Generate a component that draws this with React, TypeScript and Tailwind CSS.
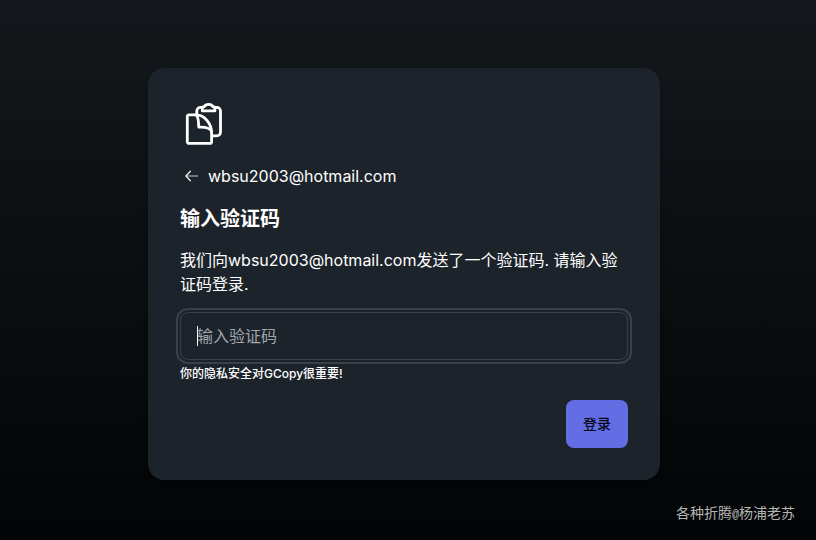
import React from "react";

function CopyLogo() {
  return (
    <svg
      className="block size-12"
      viewBox="0 0 48 48"
      fill="none"
      stroke="#fff"
      strokeWidth="2.8"
      strokeLinejoin="round"
      strokeLinecap="round"
    >
      <path d="M16.8 14V11a3.7 3.7 0 0 1 3.7-3.7h2M34.5 7.3h2.3a3.7 3.7 0 0 1 3.7 3.7v21.2a3.7 3.7 0 0 1-3.7 3.7h-4" />
      <path d="M22.3 10.9V8.3q0-1.5 1.6-1.6h.4q1-2.4 4.3-2.4t4.3 2.4h.4q1.6.1 1.6 1.6v2.6z" />
      <path d="M16 14.8H9a1.7 1.7 0 0 0-1.7 1.7v25.2a1.7 1.7 0 0 0 1.7 1.7h20.9a1.7 1.7 0 0 0 1.7-1.7V33C31.6 24 25 14.8 16 14.8z" />
      <path d="M16 14.8c3 2.7 2.2 7 2.8 12.4 5-.3 10.4 .3 12.7 3.8" />
    </svg>
  );
}

function BackArrow() {
  return (
    <svg className="block size-4" viewBox="0 0 16 16" fill="none" stroke="#fff">
      <path d="M6.7 3L1.8 8l4.9 5" strokeWidth="1.1" />
      <path d="M2 8h12" strokeWidth="1" strokeOpacity="0.75" />
    </svg>
  );
}

export default function App() {
  return (
    <div className="flex h-[540px] w-[816px] flex-col bg-linear-to-b/srgb from-[#14181c] to-[#030405] pt-[68px] font-[Inter,'Noto_Sans_CJK_SC',sans-serif] text-white">
      <main className="ml-[148px] flex h-[412px] w-[512px] shrink-0 flex-col rounded-2xl bg-[#1d232a] p-8 shadow-md">
        <CopyLogo />
        <div className="mt-4 flex h-6 items-center gap-2 pl-1 text-base">
          <BackArrow />
          <span>wbsu2003@hotmail.com</span>
        </div>
        <h2 className="mt-[17px] text-xl leading-7 font-bold">输入验证码</h2>
        <p className="mt-[15px] text-base leading-6">
          我们向wbsu2003@hotmail.com发送了一个验证码. 请输入验<br />证码登录.
        </p>
        <div className="mt-4 flex h-12 shrink-0 items-center rounded-lg border border-[#394048] px-4 outline-2 outline-offset-2 outline-[#394048]">
          <span className="h-5 w-px bg-white" />
          <span className="-ml-px text-base text-[#a0a6ae]">输入验证码</span>
        </div>
        <p className="mt-1.5 text-xs leading-4 font-medium">你的隐私安全对GCopy很重要!</p>
        <button className="mt-[18px] h-12 w-[62px] shrink-0 self-end rounded-lg bg-[#646ee4] text-sm font-medium text-[#05061a]">
          登录
        </button>
      </main>
      <footer className="mt-6 mr-[21px] self-end text-[14px] leading-5 text-[#b4b5b6] font-['Liberation_Mono','Noto_Sans_CJK_SC',monospace]">
        各种折腾<span className="inline-block w-[7px] text-[12px]">@</span>杨浦老苏
      </footer>
    </div>
  );
}
